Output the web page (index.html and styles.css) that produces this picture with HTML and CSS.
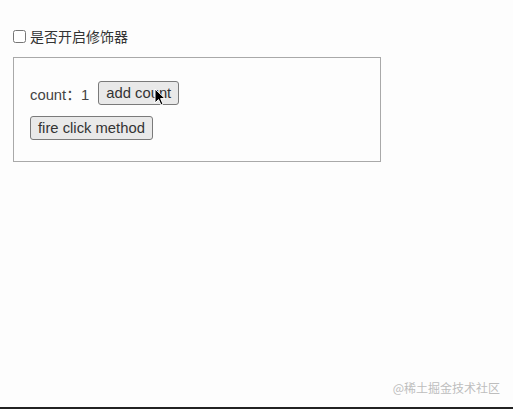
FILE: index.html
```html
<!DOCTYPE html>
<html>
<head>
<meta charset="utf-8">
<link rel="stylesheet" href="styles.css">
</head>
<body>
<div class="page">
  <label class="toggle"><input type="checkbox" class="check"><span>是否开启修饰器</span></label>
  <div class="panel">
    <div class="row">
      <span class="count">count：1</span>
      <span class="btn-wrap">
        <button class="btn">add count</button>
        <svg class="cursor" width="12" height="18" viewBox="0 0 12 18"><path d="M1 1 L1 15 L4.5 11.5 L7 17 L9 16 L6.6 10.6 L11 10.6 Z" fill="#000" stroke="#fff" stroke-width="1"/></svg>
      </span>
    </div>
    <div class="row">
      <button class="btn">fire click method</button>
    </div>
  </div>
</div>
<div class="footer">
  <span class="mark">@稀土掘金技术社区</span>
</div>
</body>
</html>
```
FILE: styles.css
```css
html, body {
  margin: 0;
  padding: 0;
  background: #fdfdfd;
}
body {
  width: 513px;
  height: 409px;
  display: flex;
  flex-direction: column;
  font-family: "Liberation Sans", Arial, "Noto Sans CJK SC", sans-serif;
  color: #333;
  font-size: 14px;
}
.page {
  flex: 1;
  padding: 28px 0 0 13px;
}
.toggle {
  display: flex;
  align-items: center;
  height: 16px;
}
.check {
  margin: 0 4px 0 0;
  width: 13px;
  height: 13px;
}
.toggle span {
  font-family: "Noto Sans CJK SC", sans-serif;
  font-size: 14px;
  color: #333;
}
.panel {
  margin-top: 13px;
  border: 1px solid #a9a9a9;
  padding: 23px 0 0 16px;
  display: flex;
  flex-direction: column;
  gap: 11px;
  box-sizing: border-box;
  width: 368px;
  height: 105px;
}
.row {
  display: flex;
  align-items: center;
  height: 24px;
}
.count {
  margin-right: 9px;
  color: #444;
  font-size: 14.8px;
}
.btn-wrap {
  position: relative;
  display: inline-flex;
}
.btn {
  font-family: "Liberation Sans", Arial, sans-serif;
  font-size: 14.8px;
  color: #333;
  height: 24px;
  padding: 0 7px;
  background: #e9e9e9;
  border: 1px solid #7a7a7a;
  border-radius: 3px;
}
.cursor {
  position: absolute;
  left: 56px;
  top: 7px;
}
.footer {
  height: 28px;
  display: flex;
  justify-content: flex-end;
  align-items: flex-start;
  border-bottom: 2px solid #222;
  box-sizing: border-box;
}
.mark {
  font-family: "Noto Sans CJK SC", sans-serif;
  font-size: 12px;
  color: #bdbdbd;
  margin-right: 13px;
  margin-top: -2px;
}
```
